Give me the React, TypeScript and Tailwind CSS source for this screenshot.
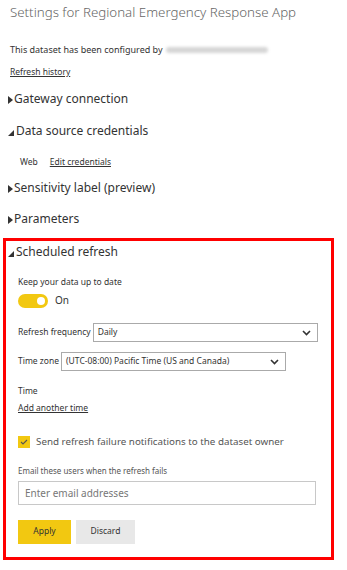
import { useState } from "react"

const Caret = ({ open }: { open?: boolean }) =>
    open ? (
        <svg width="6" height="6" viewBox="0 0 6 6" className="mr-[2px] mt-[3px]">
            <polygon points="6,0 6,6 0,6" fill="#333" />
        </svg>
    ) : (
        <svg width="5" height="8" viewBox="0 0 5 8" className="mr-[1px] mt-[1px]">
            <polygon points="0,0 5,4 0,8" fill="#333" />
        </svg>
    )

const Section = ({ title, open }: { title: string; open?: boolean }) => (
    <div className="flex items-center text-[12px] text-[#333] leading-none h-[18px]">
        <Caret open={open} />
        <span>{title}</span>
    </div>
)

const Chevron = () => (
    <svg width="9" height="6" viewBox="0 0 9 6" className="absolute right-[6px] top-[6px]">
        <polyline points="1,1 4.5,4.5 8,1" fill="none" stroke="#333" strokeWidth="1.6" />
    </svg>
)

export default function App() {
    const [on, setOn] = useState(true)
    const [notify, setNotify] = useState(true)

    return (
        <div className="w-[347px] h-[570px] bg-white overflow-hidden font-['Noto_Sans',sans-serif] text-[#333]">
            <div className="pl-[10px] pt-[2px]">
                <h1 className="text-[13.3px] font-light text-[#666] leading-[20px]">
                    Settings for Regional Emergency Response App
                </h1>
                <div className="flex items-center mt-[22px] h-[12px] text-[9px] text-[#333]">
                    <span>This dataset has been configured by</span>
                    <span className="ml-[3px] w-[102px] h-[6px] rounded-full bg-[#d6d6d6] blur-[1.5px]" />
                </div>
                <div className="mt-[10px] text-[8.5px] underline leading-[12px]">Refresh history</div>
            </div>

            <div className="pl-[8px] mt-[12px]">
                <Section title="Gateway connection" />
                <div className="mt-[14px]">
                    <Section title="Data source credentials" open />
                </div>
                <div className="flex items-center mt-[16px] pl-[12px] text-[8.5px] h-[12px]">
                    <span>Web</span>
                    <span className="ml-[12px] underline">Edit credentials</span>
                </div>
                <div className="mt-[11px]">
                    <Section title="Sensitivity label (preview)" />
                </div>
                <div className="mt-[13px]">
                    <Section title="Parameters" />
                </div>
            </div>

            <div className="ml-[3px] mt-[10px] w-[331px] h-[322px] border-[3px] border-[#ff0000] pl-[2px] pt-[2px]">
                <Section title="Scheduled refresh" open />

                <div className="pl-[10px]">
                    <div className="mt-[15px] text-[8.5px] leading-[12px]">Keep your data up to date</div>
                    <div className="flex items-center mt-[5px] gap-[7px]">
                        <button
                            onClick={() => setOn(!on)}
                            className="w-[30px] h-[14px] rounded-full bg-[#f2c811] flex items-center justify-end pr-[3px]"
                        >
                            <span className="w-[8px] h-[8px] rounded-full bg-white" />
                        </button>
                        <span className="text-[10px]">{on ? "On" : "Off"}</span>
                    </div>

                    <div className="flex items-center mt-[15px] text-[8.5px]">
                        <span className="mr-[2px]">Refresh frequency</span>
                        <div className="relative w-[225px] h-[19px] border border-[#aaa] flex items-center pl-[4px]">
                            Daily
                            <Chevron />
                        </div>
                    </div>

                    <div className="flex items-center mt-[10px] text-[8.5px]">
                        <span className="mr-[2px]">Time zone</span>
                        <div className="relative w-[225px] h-[19px] border border-[#aaa] flex items-center pl-[4px]">
                            (UTC-08:00) Pacific Time (US and Canada)
                            <Chevron />
                        </div>
                    </div>

                    <div className="mt-[14px] text-[8.5px] leading-[12px]">Time</div>
                    <div className="mt-[5px] text-[8.5px] leading-[12px] underline">Add another time</div>

                    <div className="flex items-center mt-[21px] gap-[6px]">
                        <button
                            onClick={() => setNotify(!notify)}
                            className="w-[12px] h-[12px] bg-[#f2c811] flex items-center justify-center"
                        >
                            {notify && (
                                <svg width="8" height="6" viewBox="0 0 8 6">
                                    <polyline points="1,3 3,5 7,1" fill="none" stroke="#555" strokeWidth="1.1" />
                                </svg>
                            )}
                        </button>
                        <span className="text-[9.8px] text-[#555]">Send refresh failure notifications to the dataset owner</span>
                    </div>

                    <div className="mt-[15px] text-[8px] text-[#555] leading-[12px]">Email these users when the refresh fails</div>
                    <input
                        placeholder="Enter email addresses"
                        className="mt-[4px] w-[298px] h-[24px] border border-[#c8c8c8] px-[6px] text-[10px] placeholder:text-[#777] outline-none"
                    />

                    <div className="flex gap-[5px] mt-[15px]">
                        <button className="w-[53px] h-[24px] bg-[#f2c811] text-[8.5px] text-[#333]">Apply</button>
                        <button className="w-[59px] h-[24px] bg-[#e8e8e8] text-[8.5px] text-[#333]">Discard</button>
                    </div>
                </div>
            </div>
        </div>
    )
}
